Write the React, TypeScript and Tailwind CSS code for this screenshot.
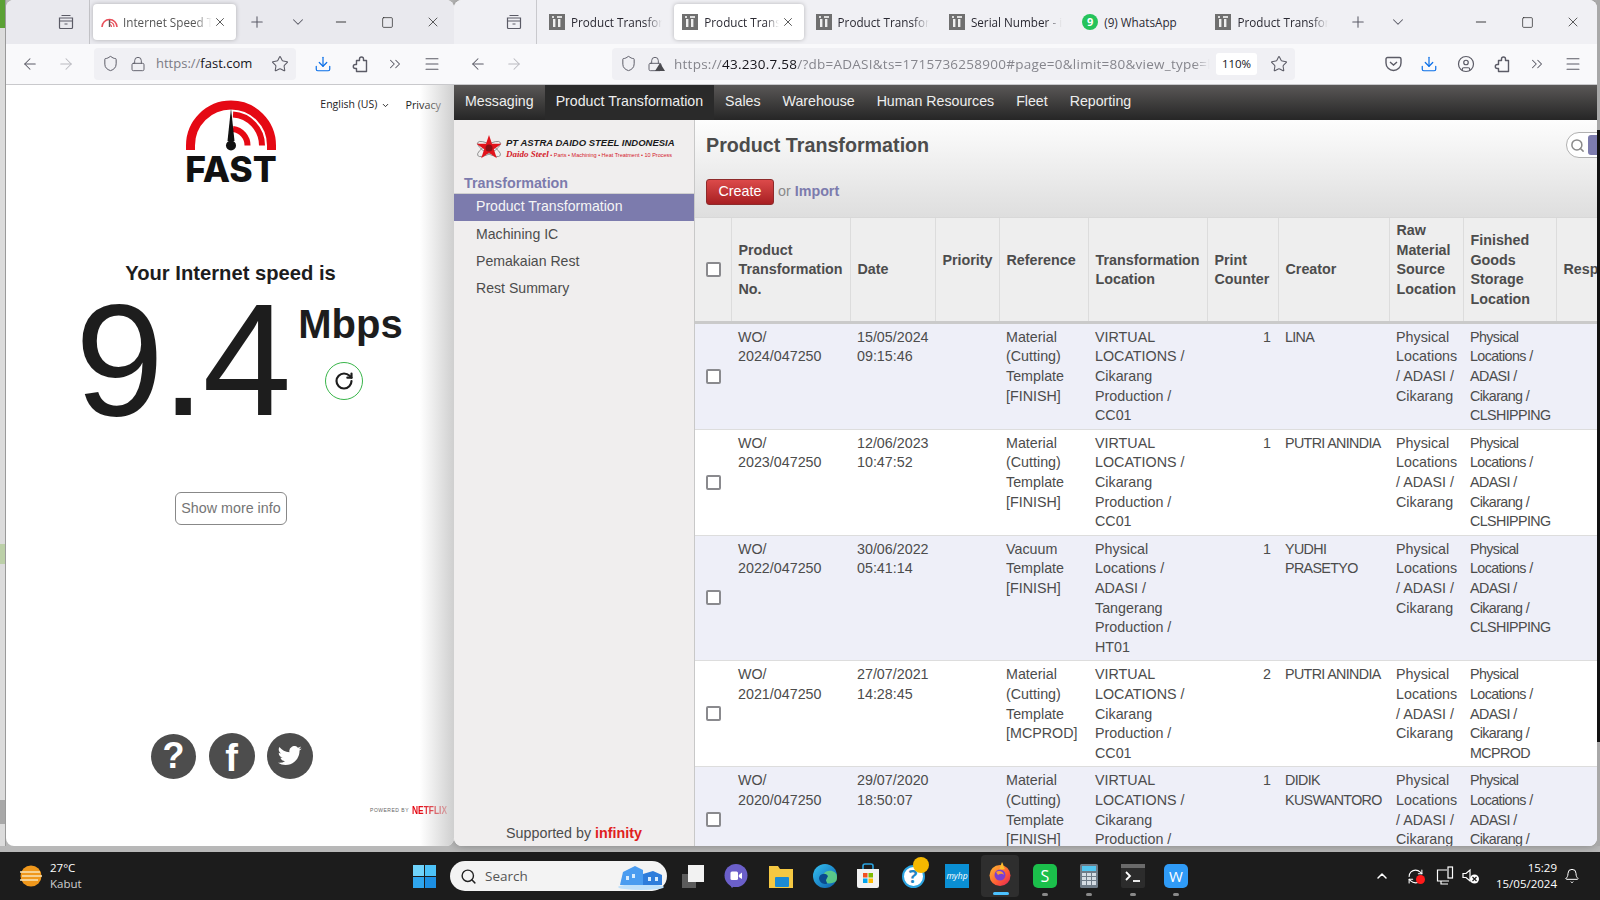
import { ArrowLeft, ArrowRight, Bell, ChevronDown, ChevronUp, ChevronsRight, CircleUser, Download, Lock, Menu, Minus, Plus, RefreshCw, RotateCw, Search, Shield, Square, Star, X } from 'lucide-react';
import type { ReactNode } from 'react';

const chrome = "font-['Open_Sans','Noto_Sans',sans-serif]";

function Slot({ className = '', children }: { className?: string; children: ReactNode }) {
  return <div className={`flex w-[20px] shrink-0 items-center justify-center text-[#5b5b66] ${className}`}>{children}</div>;
}

function TabsIcon() {
  return (
    <svg width="16" height="16" viewBox="0 0 16 16" fill="none" stroke="#5b5b66" strokeWidth="1.2">
      <path d="M3.500 1.500h9M1.500 4h13v9.500a1 1 0 0 1-1 1h-11a1 1 0 0 1-1-1zM1.500 7h13M6.500 10h3" />
    </svg>
  );
}

function PuzzleIcon() {
  return (
    <svg width="18" height="18" viewBox="0 0 18 18" fill="none" stroke="#5b5b66" strokeWidth="1.400" strokeLinejoin="round">
      <path d="M5.500 5.500h3V4a2 2 0 0 1 4 0v1.500h3v11h-10v-3H4.300a2 2 0 0 1 0-4h1.200z" />
    </svg>
  );
}

function Favicon() {
  return (
    <svg width="16" height="16" viewBox="0 0 16 16" className="shrink-0">
      <rect width="16" height="16" fill="#6f6f6f" />
      <rect x="4" y="5" width="2.400" height="8" fill="#eee" />
      <rect x="9" y="5" width="2.400" height="8" fill="#eee" />
      <rect x="3" y="2" width="2" height="2" fill="#ddd" />
      <rect x="8" y="2" width="5" height="2" fill="#ddd" />
    </svg>
  );
}

function FastFavicon() {
  return (
    <svg width="17" height="12" viewBox="0 0 17 12" fill="none" className="shrink-0">
      <path d="M1 11a7.500 7.500 0 0 1 15 0" stroke="#e8505b" strokeWidth="1.600" />
      <path d="M9 6a5 5 0 0 1 4 5M9 8.500A2.500 2.500 0 0 1 10.500 11" stroke="#e8505b" strokeWidth="1.200" />
      <path d="M8.500 4v7" stroke="#555" strokeWidth="1.400" />
    </svg>
  );
}

function Tab({ icon, label, active = false, plain = false }: { icon: ReactNode; label: string; active?: boolean; plain?: boolean }) {
  return (
    <div className={`mt-[4px] flex h-[36px] w-[130px] shrink-0 items-center self-start rounded-[4px] pl-[8px] ${active ? 'bg-white shadow-[0_0_4px_rgba(0,0,0,0.25)]' : ''}`}>
      {icon}
      <span className={`ml-[6px] overflow-hidden whitespace-nowrap pt-px text-[11.700px] text-[#2b2a33] ${active ? 'w-[75px]' : 'w-[91px]'} ${plain ? '' : '[mask-image:linear-gradient(to_right,black_82%,transparent)]'}`}>{label}</span>
      {active && <X size={14} strokeWidth={1.500} className="ml-[2px] shrink-0 text-[#444]" />}
    </div>
  );
}

function WindowControls({ gaps }: { gaps: [string, string, string, string] }) {
  return (
    <>
      <Slot className={gaps[0]}><Plus size={18} strokeWidth={1.400} /></Slot>
      <Slot className={gaps[1]}><ChevronDown size={18} strokeWidth={1.400} /></Slot>
      <Slot className={gaps[2]}><Minus size={16} strokeWidth={1.300} className="text-[#222]" /></Slot>
      <Slot className={gaps[3]}><Square size={13} strokeWidth={1.300} className="text-[#222]" /></Slot>
      <Slot className={gaps[3]}><X size={16} strokeWidth={1.100} className="text-[#222]" /></Slot>
    </>
  );
}

function LeftWindow() {
  return (
    <div className="relative flex h-[846px] w-[448px] shrink-0 flex-col overflow-hidden rounded-[8px] bg-white">
      <div className={`flex h-[44px] shrink-0 items-center bg-[#e9e9ee] ${chrome}`}>
        <Slot className="ml-[50px]"><TabsIcon /></Slot>
        <div className="ml-[13px] h-full w-px bg-[#c4c4c8]" />
        <div className="ml-[3px] mt-[4px] flex h-[36px] w-[143px] shrink-0 items-center self-start rounded-[4px] bg-white pl-[8px] shadow-[0_0_4px_rgba(0,0,0,0.25)]">
          <FastFavicon />
          <span className="ml-[5px] w-[89px] overflow-hidden whitespace-nowrap pt-px text-[11.700px] text-[#555] [mask-image:linear-gradient(to_right,black_80%,transparent)]">Internet Speed Test</span>
          <X size={14} strokeWidth={1.500} className="ml-[1px] shrink-0 text-[#444]" />
        </div>
        <WindowControls gaps={['ml-[11px]', 'ml-[21px]', 'ml-[23px]', 'ml-[26px]']} />
      </div>
      <div className={`flex h-[41px] shrink-0 items-center border-b border-[#c9c9cc] bg-[#f9f9fb] pb-px ${chrome}`}>
        <Slot className="ml-[14px]"><ArrowLeft size={18} strokeWidth={1.400} /></Slot>
        <Slot className="ml-[16px] opacity-40"><ArrowRight size={18} strokeWidth={1.400} /></Slot>
        <div className="ml-[18px] flex h-[32px] w-[202px] items-center rounded-[4px] bg-[#f0f0f4]">
          <Slot className="ml-[6px]"><Shield size={17} strokeWidth={1.400} /></Slot>
          <Slot className="ml-[8px]"><Lock size={16} strokeWidth={1.400} /></Slot>
          <span className="ml-[8px] w-[100px] whitespace-nowrap pt-px text-[13px] text-[#15141a]"><span className="text-[#7b7b84]">https://</span>fast.com</span>
          <Slot className="ml-[14px]"><Star size={18} strokeWidth={1.400} /></Slot>
        </div>
        <Slot className="ml-[17px]"><Download size={18} strokeWidth={1.600} className="text-[#0a6fe8]" /></Slot>
        <Slot className="ml-[17px]"><PuzzleIcon /></Slot>
        <Slot className="ml-[15px]"><ChevronsRight size={18} strokeWidth={1.400} /></Slot>
        <Slot className="ml-[17px]"><Menu size={18} strokeWidth={1.400} /></Slot>
      </div>
      <div className="relative flex min-h-0 flex-1 flex-col font-['Liberation_Sans',Arial,sans-serif] text-[#1d1d1d]">
        <div className={`absolute right-[13px] top-[12px] flex items-center text-[10.500px] text-[#222] ${chrome}`}>
          <span>English (US)</span>
          <ChevronDown size={9} strokeWidth={2.500} className="ml-[4px]" />
          <span className="ml-[15px] text-[10.800px]">Privacy</span>
        </div>
        <div className="ml-[180px] mt-[15px] flex w-[90px] flex-col items-center">
          <svg width="90" height="52" viewBox="0 0 90 52" fill="none">
            <path d="M4.500 50V45.500A40.500 40.500 0 0 1 85.500 45.500V50" stroke="#e50914" strokeWidth="9" />
            <path d="M47 14.500A31 31 0 0 1 76 45.500" stroke="#e50914" strokeWidth="6" />
            <path d="M47 29A16.500 16.500 0 0 1 61.500 45.500" stroke="#e50914" strokeWidth="6" />
            <path d="M45 8l-3.500 33h7z" fill="#111" />
            <circle cx="45" cy="45.500" r="5" fill="#111" />
          </svg>
          <span className="mt-[2px] font-['Inter',sans-serif] text-[35.500px] font-extrabold leading-[32px] text-[#111]">FAST</span>
        </div>
        <h2 className="ml-px mt-[75px] text-center text-[20.200px] font-bold leading-[24px]">Your Internet speed is</h2>
        <div className="flex pl-[69px]">
          <span className="mb-[10px] text-[160px] leading-[150px] tracking-[-3px] text-[#1d1d1d]">9.4</span>
          <div className="ml-[7px] flex w-[110px] flex-col items-center">
            <span className="mt-[16px] text-[40px] font-bold leading-[46px]">Mbps</span>
            <div className="mr-[12px] mt-[15px] flex h-[38px] w-[38px] items-center justify-center rounded-full border border-[#39b54a]">
              <RotateCw size={20} strokeWidth={2.600} className="text-[#1d1d1d]" />
            </div>
          </div>
        </div>
        <button className="ml-[169px] mt-[47px] h-[33px] w-[112px] rounded-[6px] border border-[#888] text-[14.300px] text-[#757575]">Show more info</button>
        <div className="ml-[145px] mt-[208px] flex w-[162px] items-center justify-between">
          <div className="flex h-[45px] w-[45px] items-center justify-center rounded-full bg-[#4d4d4d] text-[36px] font-bold leading-none text-white">?</div>
          <div className="flex h-[46px] w-[46px] items-end justify-center rounded-full bg-[#4d4d4d] text-[38px] font-bold leading-[42px] text-white">f</div>
          <div className="flex h-[46px] w-[46px] items-center justify-center rounded-full bg-[#4d4d4d]">
            <svg width="24" height="20" viewBox="0 0 24 20" fill="#fff">
              <path d="M23.600 2.400c-.9.400-1.800.7-2.800.8 1-.6 1.800-1.600 2.200-2.700-.9.600-2 1-3.100 1.200A4.900 4.900 0 0 0 11.500 6.200C7.400 6 3.800 4 1.400.9c-1.300 2.200-.7 5 1.500 6.500-.8 0-1.500-.2-2.200-.6 0 2.300 1.600 4.400 3.900 4.900-.7.200-1.500.2-2.200.1.600 2 2.400 3.300 4.600 3.400A9.900 9.900 0 0 1 0 16.700 14 14 0 0 0 7.500 19c9.100 0 14.300-7.700 14-14.600 1-.7 1.800-1.500 2.100-2z" />
            </svg>
          </div>
        </div>
        <div className="ml-auto mr-[8px] mt-[26px] flex items-center">
          <span className="text-[5px] tracking-[0.5px] text-[#666]">POWERED BY</span>
          <span className="ml-[3px] w-[34px] origin-left scale-x-[0.8] text-[10.500px] font-bold leading-none text-[#e50914]">NETFLIX</span>
        </div>
        <div className="pointer-events-none absolute inset-y-0 right-0 w-[34px] bg-gradient-to-r from-transparent to-[#cfcfcf]" />
      </div>
    </div>
  );
}

const cols = ['w-[36px]', 'w-[119px]', 'w-[85px]', 'w-[64px]', 'w-[89px]', 'w-[119px]', 'w-[71px]', 'w-[111px]', 'w-[74px]', 'w-[93px]', 'w-[131px]'];

const virtualLoc = 'VIRTUAL\nLOCATIONS /\nCikarang\nProduction /\nCC01';
const rawLoc = 'Physical\nLocations\n/ ADASI /\nCikarang';

const rows = [
  { no: 'WO/\n2024/047250', date: '15/05/2024\n09:15:46', ref: 'Material\n(Cutting)\nTemplate\n[FINISH]', loc: virtualLoc, count: 1, creator: 'LINA', raw: rawLoc, fin: 'Physical\nLocations /\nADASI /\nCikarang /\nCLSHIPPING' },
  { no: 'WO/\n2023/047250', date: '12/06/2023\n10:47:52', ref: 'Material\n(Cutting)\nTemplate\n[FINISH]', loc: virtualLoc, count: 1, creator: 'PUTRI ANINDIA', raw: rawLoc, fin: 'Physical\nLocations /\nADASI /\nCikarang /\nCLSHIPPING' },
  { no: 'WO/\n2022/047250', date: '30/06/2022\n05:41:14', ref: 'Vacuum\nTemplate\n[FINISH]', loc: 'Physical\nLocations /\nADASI /\nTangerang\nProduction /\nHT01', count: 1, creator: 'YUDHI\nPRASETYO', raw: rawLoc, fin: 'Physical\nLocations /\nADASI /\nCikarang /\nCLSHIPPING' },
  { no: 'WO/\n2021/047250', date: '27/07/2021\n14:28:45', ref: 'Material\n(Cutting)\nTemplate\n[MCPROD]', loc: virtualLoc, count: 2, creator: 'PUTRI ANINDIA', raw: rawLoc, fin: 'Physical\nLocations /\nADASI /\nCikarang /\nMCPROD' },
  { no: 'WO/\n2020/047250', date: '29/07/2020\n18:50:07', ref: 'Material\n(Cutting)\nTemplate\n[FINISH]', loc: virtualLoc, count: 1, creator: 'DIDIK\nKUSWANTORO', raw: rawLoc, fin: 'Physical\nLocations /\nADASI /\nCikarang /\nCLSHIPPING' },
];

function Check() {
  return <div className="ml-[11px] h-[15px] w-[15px] rounded-[2px] border-2 border-[#8a8a8e] bg-white" />;
}

const thClass = 'border-r border-[#dcdcdc] px-[7px] pt-[2px] text-left align-middle font-bold';
const tdClass = 'px-[7px] pb-[2.500px] pt-[4px] align-top whitespace-pre';

function ProductTable() {
  return (
    <table className="w-[992px] table-fixed border-collapse text-[14.300px] leading-[19.700px] text-[#4c4c4c]">
      <colgroup>
        {cols.map((c, i) => <col key={i} className={c} />)}
      </colgroup>
      <thead>
        <tr className="h-[104px] border-b-[3px] border-[#cacaca] bg-[#eeeeee]">
          <th className="border-r border-[#dcdcdc] p-0"><Check /></th>
          <th className={thClass}>Product<br />Transformation<br />No.</th>
          <th className={thClass}>Date</th>
          <th className={thClass}>Priority<br />&nbsp;</th>
          <th className={thClass}>Reference<br />&nbsp;</th>
          <th className={thClass}>Transformation<br />Location</th>
          <th className={thClass}>Print<br />Counter</th>
          <th className={thClass}>Creator</th>
          <th className={thClass}>Raw<br />Material<br />Source<br />Location<br />&nbsp;</th>
          <th className={thClass}>Finished<br />Goods<br />Storage<br />Location</th>
          <th className={thClass}>Responsible</th>
        </tr>
      </thead>
      <tbody>
        {rows.map((r, i) => (
          <tr key={r.no} className={`border-b border-[#dddddd] ${i % 2 === 0 ? 'bg-[#eeeff8]' : 'bg-white'}`}>
            <td className="p-0 align-middle"><Check /></td>
            <td className={tdClass}>{r.no}</td>
            <td className={tdClass}>{r.date}</td>
            <td className={tdClass}></td>
            <td className={tdClass}>{r.ref}</td>
            <td className={tdClass}>{r.loc}</td>
            <td className={`${tdClass} text-right`}>{r.count}</td>
            <td className={`${tdClass} tracking-[-0.650px]`}>{r.creator}</td>
            <td className={tdClass}>{r.raw}</td>
            <td className={`${tdClass} tracking-[-0.600px]`}>{r.fin}</td>
            <td className={tdClass}></td>
          </tr>
        ))}
      </tbody>
    </table>
  );
}

function CompanyLogo() {
  return (
    <div className="ml-[22px] mt-[15px] flex items-center">
      <svg width="26" height="26" viewBox="0 0 26 26" className="shrink-0">
        <ellipse cx="13" cy="14" rx="13" ry="4.500" fill="none" stroke="#777" strokeWidth=".7" transform="rotate(30 13 14)" />
        <ellipse cx="13" cy="14" rx="13" ry="4.500" fill="none" stroke="#777" strokeWidth=".7" transform="rotate(-30 13 14)" />
        <path d="M13 0l3 8.800h9.500l-7.700 5.500 3 9L13 17.800l-7.800 5.500 3-9L.5 8.800H10z" fill="#e2141c" />
        <circle cx="13" cy="13" r="3.500" fill="#8a1116" />
      </svg>
      <div className="ml-[4px] flex flex-col">
        <span className="whitespace-nowrap text-[9.500px] font-bold italic leading-[13px] text-[#1a1a1a]">PT ASTRA DAIDO STEEL INDONESIA</span>
        <span className="whitespace-nowrap text-[5.500px] leading-[10px] text-[#d4202a]"><span className="font-['Liberation_Serif',serif] text-[9px] font-bold italic">Daido Steel</span> • Parts • Machining • Heat Treatment • 10 Process</span>
      </div>
    </div>
  );
}

function RightWindow() {
  const items = ['Machining IC', 'Pemakaian Rest', 'Rest Summary'];
  const nav = ['Messaging', 'Product Transformation', 'Sales', 'Warehouse', 'Human Resources', 'Fleet', 'Reporting'];
  return (
    <div className="flex h-[846px] w-[1143px] shrink-0 flex-col overflow-hidden rounded-[8px] bg-white shadow-[0_0_10px_rgba(0,0,0,0.3)]">
      <div className={`flex h-[44px] shrink-0 items-center bg-[#f0f0f4] ${chrome}`}>
        <Slot className="ml-[50px]"><TabsIcon /></Slot>
        <div className="ml-[12px] h-full w-px bg-[#c9c9cd]" />
        <div className="ml-[4px] flex h-full gap-[3.300px]">
          <Tab icon={<Favicon />} label="Product Transformation" />
          <Tab icon={<Favicon />} label="Product Transformation" active />
          <Tab icon={<Favicon />} label="Product Transformation" />
          <Tab icon={<Favicon />} label="Serial Number - infinity" />
          <Tab icon={<div className="flex h-[16px] w-[16px] shrink-0 items-center justify-center rounded-full bg-[#25c35b] text-[11px] font-bold text-white">9</div>} label="(9) WhatsApp" plain />
          <Tab icon={<Favicon />} label="Product Transformation" />
        </div>
        <WindowControls gaps={['ml-[11px]', 'ml-[20px]', 'ml-[63px]', 'ml-[26px]']} />
      </div>
      <div className={`flex h-[41px] shrink-0 items-center border-b border-[#c9c9cc] bg-[#f9f9fb] pb-px ${chrome}`}>
        <Slot className="ml-[14px]"><ArrowLeft size={18} strokeWidth={1.400} /></Slot>
        <Slot className="ml-[16px] opacity-40"><ArrowRight size={18} strokeWidth={1.400} /></Slot>
        <div className="ml-[88px] flex h-[32px] w-[683px] items-center rounded-[4px] bg-[#f0f0f4]">
          <Slot className="ml-[6px]"><Shield size={17} strokeWidth={1.400} /></Slot>
          <Slot className="relative ml-[7px]">
            <Lock size={16} strokeWidth={1.400} />
            <div className="absolute bottom-[1px] right-[0px] h-0 w-0 border-x-[5px] border-b-[8px] border-x-transparent border-b-[#4a4a4f]" />
          </Slot>
          <span className="ml-[9px] w-[536px] overflow-hidden whitespace-nowrap pt-px text-[13.500px] tracking-[0.250px] text-[#85858c] [mask-image:linear-gradient(to_right,black_97%,transparent)]">
            https://<span className="text-[#15141a]">43.230.7.58</span>/?db=ADASI&amp;ts=1715736258900#page=0&amp;limit=80&amp;view_type=list
          </span>
          <span className="ml-[6px] flex h-[22px] w-[41px] items-center justify-center rounded-[3px] bg-white text-[11.500px] text-[#15141a]">110%</span>
          <Slot className="ml-[12px]"><Star size={18} strokeWidth={1.400} /></Slot>
        </div>
        <Slot className="ml-[88px]">
          <svg width="17" height="16" viewBox="0 0 17 16" fill="none" stroke="#5b5b66" strokeWidth="1.400">
            <path d="M2.500 1.500h12a1.500 1.500 0 0 1 1.500 1.500v4a7.500 7.500 0 0 1-15 0V3a1.500 1.500 0 0 1 1.500-1.500zM5 6l3.500 3L12 6" />
          </svg>
        </Slot>
        <Slot className="ml-[16px]"><Download size={18} strokeWidth={1.600} className="text-[#0a6fe8]" /></Slot>
        <Slot className="ml-[17px]"><CircleUser size={18} strokeWidth={1.600} /></Slot>
        <Slot className="ml-[16px]"><PuzzleIcon /></Slot>
        <Slot className="ml-[15px]"><ChevronsRight size={18} strokeWidth={1.400} /></Slot>
        <Slot className="ml-[16px]"><Menu size={18} strokeWidth={1.400} /></Slot>
      </div>
      <div className="flex min-h-0 flex-1 flex-col font-['Liberation_Sans',Arial,sans-serif]">
        <nav className="flex h-[35px] shrink-0 items-stretch bg-gradient-to-b from-[#5a5857] to-[#262626] text-[14.200px] text-[#eeeeee]">
          {nav.map((n, i) => (
            <span key={n} className={`flex items-center px-[11px] pb-[2px] ${i === 1 ? 'bg-[#2a2a2a]' : ''}`}>{n}</span>
          ))}
        </nav>
        <div className="flex min-h-0 flex-1">
          <aside className="flex w-[241px] shrink-0 flex-col border-r border-[#c8c8c8] bg-[#f0eeee] text-[14.100px] text-[#4c4c4c]">
            <CompanyLogo />
            <div className="ml-[10px] mt-[12px] text-[14.300px] font-bold leading-[20px] text-[#7c7bad]">Transformation</div>
            <div className="flex h-[28px] items-center border-t border-[#cfcfcf] bg-[#7c7bad] pb-[2px] pl-[22px] text-[#f5f5f5]">Product Transformation</div>
            {items.map((it) => (
              <div key={it} className="flex h-[27px] items-center pl-[22px]">{it}</div>
            ))}
            <div className="mb-[2px] mt-auto text-center text-[14.300px]">Supported by <span className="font-bold text-[#e02020]">infinity</span></div>
          </aside>
          <main className="min-w-0 flex-1 overflow-hidden">
            <div className="relative h-[98px] border-b border-[#d8d8d8] bg-gradient-to-b from-[#fdfdfd] to-[#dedede] pl-[11px]">
              <h1 className="pt-[11px] text-[19.700px] font-bold leading-[28px] text-[#4c4c4c]">Product Transformation</h1>
              <div className="mt-[20px] flex items-center text-[14.300px]">
                <button className="h-[26px] w-[68px] rounded-[3px] border border-[#8e2a2a] bg-gradient-to-b from-[#dc4a4a] to-[#a81e22] text-[#fff]">Create</button>
                <span className="ml-[4px] text-[#8a8a8a]">or</span>
                <span className="ml-[4px] font-bold text-[#7c7bad]">Import</span>
              </div>
              <div className="absolute right-[-40px] top-[12px] flex h-[26px] w-[71px] items-center rounded-full border border-[#b0b0b0] bg-white pl-[3px]">
                <Search size={15} strokeWidth={2.400} className="text-[#8a8a8a]" />
                <div className="ml-[3px] h-[20px] w-[30px] rounded-[3px] bg-[#7c7bad]" />
              </div>
            </div>
            <ProductTable />
          </main>
        </div>
      </div>
    </div>
  );
}

function TaskIcon({ className = '', dot = false, children }: { className?: string; dot?: boolean; children: ReactNode }) {
  return (
    <div className={`relative flex h-[24px] w-[24px] shrink-0 items-center justify-center ${className}`}>
      {children}
      {dot && <div className="absolute -bottom-[8px] left-[9px] h-[3px] w-[6px] rounded-full bg-[#8a8a8a]" />}
    </div>
  );
}

function Taskbar() {
  return (
    <div className="flex h-[48px] shrink-0 items-center bg-[#1c1c1c] font-['Open_Sans','Noto_Sans',sans-serif] text-white">
      <svg width="22" height="24" viewBox="0 0 22 24" className="ml-[20px] shrink-0">
        <circle cx="11" cy="12" r="10.500" fill="#f0981c" />
        <path d="M0 8h20M2 12h20M0 16h18" stroke="#f7e3b8" strokeWidth="1.600" />
      </svg>
      <div className="ml-[8px] w-[40px] text-[11.500px] leading-[16px]">
        <div>27°C</div>
        <div className="text-[#cfcfcf]">Kabut</div>
      </div>
      <div className="ml-[323px] grid h-[23px] w-[23px] shrink-0 grid-cols-2 gap-[1px]">
        <div className="bg-[#6fd3fb]" />
        <div className="bg-[#4cc2f8]" />
        <div className="bg-[#2fa6ee]" />
        <div className="bg-[#1c8fe3]" />
      </div>
      <div className="ml-[14px] flex h-[30px] w-[217px] shrink-0 items-center rounded-full bg-[#f3f3f3] text-[13.500px] text-[#555]">
        <Search size={17} strokeWidth={2} className="ml-[10px] text-[#222]" />
        <span className="ml-[8px]">Search</span>
        <svg width="48" height="28" viewBox="0 0 48 28" className="ml-[auto] mr-[2px]">
          <ellipse cx="24" cy="25" rx="23" ry="3" fill="#bfe0fa" />
          <path d="M3 23l3-13 12-6 8 4v15z" fill="#4a9cf0" />
          <path d="M26 23V12l10-3 9 4v10z" fill="#2f7ddb" />
          <path d="M9 14h3v4H9zM15 12h3v4h-3zM31 15h3v4h-3zM38 15h3v4h-3z" fill="#d8ecfd" />
        </svg>
      </div>
      <TaskIcon className="ml-[14px]">
        <svg width="24" height="24" viewBox="0 0 24 24">
          <rect x="1" y="10" width="14" height="14" fill="#5c5c5c" />
          <rect x="7" y="1" width="16" height="17" fill="#f2f2f2" />
        </svg>
      </TaskIcon>
      <TaskIcon className="ml-[19px]">
        <svg width="24" height="24" viewBox="0 0 24 24">
          <ellipse cx="12" cy="11.500" rx="11.500" ry="11.500" fill="#6b5fc9" />
          <path d="M8 24l3-3H6z" fill="#6b5fc9" />
          <rect x="6.500" y="7.500" width="7.500" height="8.500" rx="1.500" fill="#fff" />
          <path d="M14.800 11l3.200-2.500v6.500L14.800 13z" fill="#fff" />
        </svg>
      </TaskIcon>
      <TaskIcon className="ml-[21px]">
        <svg width="24" height="24" viewBox="0 0 24 24">
          <path d="M0 2h9l2 3h13v19H0z" fill="#f5c842" />
          <rect x="6" y="13" width="14" height="10" rx="1" fill="#1a8ad4" />
        </svg>
      </TaskIcon>
      <TaskIcon className="ml-[20px]">
        <svg width="24" height="24" viewBox="0 0 24 24">
          <defs>
            <linearGradient id="edge" x1="0" y1="0" x2="1" y2="1">
              <stop offset="0" stopColor="#35c1f1" />
              <stop offset="1" stopColor="#0b5cab" />
            </linearGradient>
          </defs>
          <circle cx="12" cy="12" r="12" fill="url(#edge)" />
          <path d="M24 13c0-5-5-7-9-6-5 1-7 6-4 10 2 3 7 3 11 1 2-1 2-3 2-5z" fill="#6ad97a" opacity=".8" />
          <path d="M15 12a5 5 0 0 0-9 2c0 3 3 6 6 6 4 0 1-2 1-4z" fill="#0a4a8f" />
        </svg>
      </TaskIcon>
      <TaskIcon className="ml-[19px]">
        <svg width="24" height="26" viewBox="0 0 24 26">
          <path d="M7 6V3a2 2 0 0 1 2-2h6a2 2 0 0 1 2 2v3" fill="none" stroke="#2aa3e0" strokeWidth="1.600" />
          <path d="M1 6h22v17a2 2 0 0 1-2 2H3a2 2 0 0 1-2-2z" fill="#f2f2f2" />
          <rect x="7" y="10" width="4.500" height="4.500" fill="#f25022" />
          <rect x="12.500" y="10" width="4.500" height="4.500" fill="#7fba00" />
          <rect x="7" y="15.500" width="4.500" height="4.500" fill="#00a4ef" />
          <rect x="12.500" y="15.500" width="4.500" height="4.500" fill="#ffb900" />
        </svg>
      </TaskIcon>
      <TaskIcon className="ml-[21px]">
        <div className="flex h-[23px] w-[23px] items-center justify-center rounded-full border-[2px] border-[#2aa3e0] bg-white text-[18px] font-bold leading-none text-[#1f86c4]">?</div>
        <div className="absolute -right-[4px] -top-[7px] h-[16px] w-[16px] rounded-full bg-[#f5b800]" />
      </TaskIcon>
      <TaskIcon className="ml-[20px]">
        <div className="flex h-[24px] w-[24px] items-center justify-center bg-[#0a8fd4] text-[8.500px] italic text-white">myhp</div>
      </TaskIcon>
      <div className="relative ml-[12px] flex h-[42px] w-[38px] shrink-0 items-center justify-center rounded-[4px] bg-[#2e2e2e]">
        <svg width="24" height="24" viewBox="0 0 24 24" className="-mt-[4px]">
          <defs>
            <linearGradient id="fox" x1="0" y1="0" x2="1" y2="1">
              <stop offset="0" stopColor="#ffbd2e" />
              <stop offset=".6" stopColor="#ff5a36" />
              <stop offset="1" stopColor="#e01e5a" />
            </linearGradient>
          </defs>
          <circle cx="12" cy="13.500" r="10.500" fill="url(#fox)" />
          <path d="M14 0c2 3 1 5 3 7l-6 1z" fill="#ffbd2e" />
          <circle cx="12" cy="13" r="5.500" fill="#7b3fd0" />
          <path d="M8 10c3-2 7-1 8 3-2-2-4-1-6 0z" fill="#ff9d2e" />
        </svg>
        <div className="absolute bottom-[2px] left-[12px] h-[3px] w-[16px] rounded-full bg-[#4cc2ff]" />
      </div>
      <TaskIcon className="ml-[14px]" dot>
        <div className="flex h-[24px] w-[24px] items-center justify-center rounded-[5px] bg-[#1bbf4b] text-[16px] text-white">S</div>
      </TaskIcon>
      <TaskIcon className="ml-[20px]" dot>
        <svg width="18" height="24" viewBox="0 0 18 24">
          <rect width="18" height="24" rx="1.500" fill="#6f7c88" />
          <rect x="2" y="2" width="14" height="5" fill="#53c6f0" />
          <path d="M2 9h4v3H2zM7 9h4v3H7zM12 9h4v3h-4zM2 13h4v3H2zM7 13h4v3H7zM12 13h4v3h-4zM2 17h4v4H2zM7 17h4v4H7zM12 17h4v4h-4z" fill="#d5dde4" />
        </svg>
      </TaskIcon>
      <TaskIcon className="ml-[20px]" dot>
        <svg width="24" height="24" viewBox="0 0 24 24">
          <rect width="24" height="24" rx="2" fill="#2c2c2c" />
          <rect width="24" height="4" fill="#6a6a6a" />
          <path d="M5 8l4 4-4 4" fill="none" stroke="#fff" strokeWidth="1.800" />
          <path d="M12 17h7" stroke="#fff" strokeWidth="1.800" />
        </svg>
      </TaskIcon>
      <TaskIcon className="ml-[19px]" dot>
        <div className="flex h-[24px] w-[24px] items-center justify-center rounded-[5px] bg-[#2f9bf7] text-[15px] text-white">W</div>
      </TaskIcon>
      <ChevronUp size={16} strokeWidth={2.200} className="ml-[186px] shrink-0" />
      <div className="relative ml-[15px] flex w-[20px] shrink-0 justify-center">
        <RefreshCw size={17} strokeWidth={1.500} />
        <div className="absolute bottom-[1px] right-[0px] h-[9px] w-[9px] rounded-full bg-[#ff1a1a]" />
      </div>
      <div className="ml-[10px] flex w-[20px] shrink-0 justify-center">
        <svg width="18" height="20" viewBox="0 0 18 20" fill="none" stroke="#fff" strokeWidth="1.200">
          <path d="M11 4H1.500v11H13M5 15v3h7" />
          <rect x="12" y="1" width="4.500" height="11" />
        </svg>
      </div>
      <div className="ml-[6px] flex w-[20px] shrink-0 justify-center">
        <svg width="18" height="18" viewBox="0 0 18 18" fill="none" stroke="#fff" strokeWidth="1.200">
          <path d="M1 6.500v4h3l4 3.500V3L4 6.500z" />
          <circle cx="12.500" cy="12" r="4.500" fill="#fff" stroke="none" />
          <path d="M10.500 10l4 4M14.500 10l-4 4" stroke="#1c1c1c" />
        </svg>
      </div>
      <div className="ml-[6px] w-[70px] shrink-0 text-right text-[11.500px] leading-[16px]">
        <div>15:29</div>
        <div>15/05/2024</div>
      </div>
      <div className="ml-[5px] flex w-[20px] shrink-0 justify-center"><Bell size={16} strokeWidth={1.500} /></div>
    </div>
  );
}

function LeftStrip() {
  return (
    <div className="flex h-[846px] w-[6px] shrink-0 flex-col border-r border-[#9a9a9a] bg-[#dcdcdc]">
      <div className="h-[28px] bg-[#5ba135]" />
      <div className="mt-[516px] h-[20px] bg-[#bcd0a8]" />
      <div className="mt-[236px] h-[24px] bg-[#a8a8a8]" />
    </div>
  );
}

function RightStrip() {
  return (
    <div className="flex h-[846px] w-[3px] shrink-0 flex-col bg-[#a8a8a8]">
      <div className="mt-[130px] h-[612px] bg-[#111111]" />
    </div>
  );
}

export default function App() {
  return (
    <div className="flex h-[900px] w-[1600px] flex-col overflow-hidden bg-[#a8a8a8]">
      <div className="flex h-[852px] shrink-0 items-start bg-[#b8b8b8]">
        <LeftStrip />
        <LeftWindow />
        <RightWindow />
        <RightStrip />
      </div>
      <Taskbar />
    </div>
  );
}
